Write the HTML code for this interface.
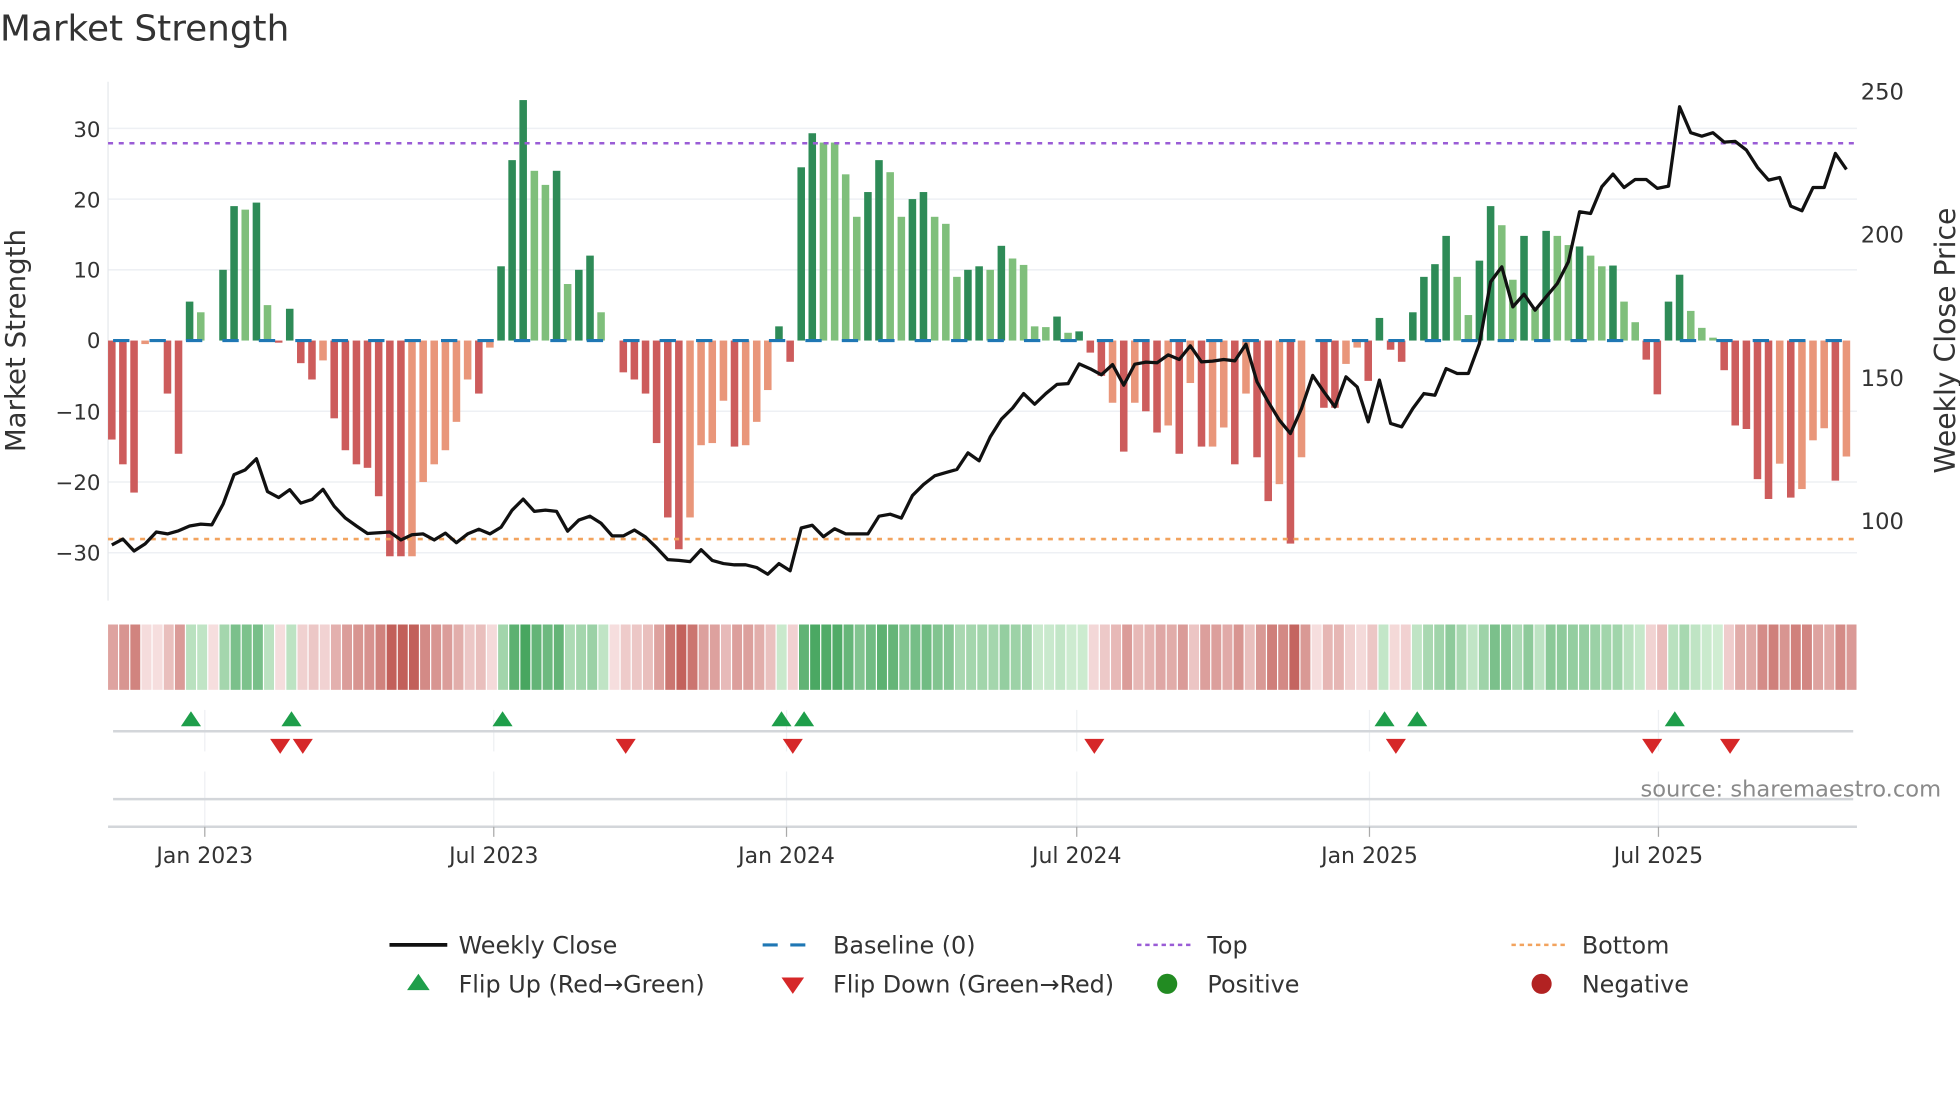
<!DOCTYPE html>
<html><head><meta charset="utf-8">
<style>
html,body{margin:0;padding:0;background:#fff;width:1960px;height:1102px;overflow:hidden}
svg{display:block}
text{font-family:"DejaVu Sans","Liberation Sans",sans-serif;fill:#333}
</style></head>
<body>
<svg id="s" width="1960" height="1102" viewBox="0 0 1560 877" xmlns="http://www.w3.org/2000/svg">
<rect width="1560" height="877" fill="#fff"/>
<text x="0" y="32" font-size="28.5">Market Strength</text>
<g id="grid"></g>
<line x1="86" y1="65" x2="86" y2="478" stroke="#e6e8ec" stroke-width="1"/>
<g id="bars"></g>
<line x1="90" y1="271" x2="1476" y2="271" stroke="#1f77b4" stroke-width="2.5" stroke-dasharray="13,16"/>
<line x1="86" y1="114" x2="1478" y2="114" stroke="#9a5cd6" stroke-width="2" stroke-dasharray="4,4.5"/>
<line x1="86" y1="429" x2="1478" y2="429" stroke="#f2a35e" stroke-width="2" stroke-dasharray="4,4.5"/>
<polyline id="price" fill="none" stroke="#111" stroke-width="2.6" stroke-linejoin="round"/>
<g font-size="17" text-anchor="end">
<text x="80" y="109">30</text><text x="80" y="165">20</text><text x="80" y="221">10</text><text x="80" y="277">0</text>
<text x="80" y="334">−10</text><text x="80" y="390">−20</text><text x="80" y="446">−30</text>
</g>
<g font-size="18">
<text x="1481" y="79">250</text><text x="1481" y="193">200</text><text x="1481" y="307">150</text><text x="1481" y="421">100</text>
</g>
<text transform="translate(20,271) rotate(-90)" font-size="22" text-anchor="middle">Market Strength</text>
<text transform="translate(1556,271) rotate(-90)" font-size="22.5" text-anchor="middle">Weekly Close Price</text>
<g id="heat"></g>
<g stroke="#eef0f3" stroke-width="1">
<line x1="163" y1="565" x2="163" y2="598"/><line x1="393" y1="565" x2="393" y2="598"/><line x1="626" y1="565" x2="626" y2="598"/>
<line x1="857" y1="565" x2="857" y2="598"/><line x1="1090" y1="565" x2="1090" y2="598"/><line x1="1320" y1="565" x2="1320" y2="598"/>
<line x1="163" y1="614" x2="163" y2="658"/><line x1="393" y1="614" x2="393" y2="658"/><line x1="626" y1="614" x2="626" y2="658"/>
<line x1="857" y1="614" x2="857" y2="658"/><line x1="1090" y1="614" x2="1090" y2="658"/><line x1="1320" y1="614" x2="1320" y2="658"/>
</g>
<line x1="90" y1="582" x2="1475" y2="582" stroke="#d3d6da" stroke-width="2"/>
<line x1="90" y1="636" x2="1475" y2="636" stroke="#d3d6da" stroke-width="2"/>
<line x1="86" y1="658" x2="1478" y2="658" stroke="#d3d6da" stroke-width="2"/>
<g id="marks"></g>
<g stroke="#aaa" stroke-width="1">
<line x1="163" y1="658" x2="163" y2="666"/><line x1="393" y1="658" x2="393" y2="666"/><line x1="626" y1="658" x2="626" y2="666"/>
<line x1="857" y1="658" x2="857" y2="666"/><line x1="1090" y1="658" x2="1090" y2="666"/><line x1="1320" y1="658" x2="1320" y2="666"/>
</g>
<g font-size="17.5" text-anchor="middle">
<text x="163" y="687">Jan 2023</text><text x="393" y="687">Jul 2023</text><text x="626" y="687">Jan 2024</text>
<text x="857" y="687">Jul 2024</text><text x="1090" y="687">Jan 2025</text><text x="1320" y="687">Jul 2025</text>
</g>
<text x="1545" y="634" font-size="18" text-anchor="end" style="fill:#8a8a8a">source: sharemaestro.com</text>
<g font-size="19">
<line x1="310" y1="752" x2="356" y2="752" stroke="#111" stroke-width="3"/>
<text x="365" y="759">Weekly Close</text>
<line x1="607" y1="752" x2="651" y2="752" stroke="#1f77b4" stroke-width="2.5" stroke-dasharray="12,10"/>
<text x="663" y="759">Baseline (0)</text>
<line x1="905" y1="752" x2="949" y2="752" stroke="#9a5cd6" stroke-width="2" stroke-dasharray="3.5,3"/>
<text x="961" y="759">Top</text>
<line x1="1203" y1="752" x2="1247" y2="752" stroke="#f2a35e" stroke-width="2" stroke-dasharray="3.5,3"/>
<text x="1259" y="759">Bottom</text>
<polygon points="333,775 342,788 324,788" fill="#1e9e4a"/>
<text x="365" y="790">Flip Up (Red→Green)</text>
<polygon points="622,778 640,778 631,791" fill="#d62728"/>
<text x="663" y="790">Flip Down (Green→Red)</text>
<circle cx="929" cy="783" r="8" fill="#228b22"/>
<text x="961" y="790">Positive</text>
<circle cx="1227" cy="783" r="8" fill="#b22222"/>
<text x="1259" y="790">Negative</text>
</g>
</svg>
<script>
var V=[-14,-17.5,-21.5,-0.5,0,-7.5,-16,5.5,4,0,
10,19,18.5,19.5,5,-0.3,4.5,-3.2,-5.5,-2.8,
-11,-15.5,-17.5,-18,-22,-30.5,-30.5,-30.5,-20,-17.5,
-15.5,-11.5,-5.5,-7.5,-1,10.5,25.5,34,24,22,
24,8,10,12,4,0,-4.5,-5.5,-7.5,-14.5,
-25,-29.5,-25,-14.8,-14.5,-8.5,-15,-14.8,-11.5,-7,
2,-3,24.5,29.3,28,28,23.5,17.5,21,25.5,
23.8,17.5,20,21,17.5,16.5,9,10,10.5,10,
13.4,11.6,10.7,2,1.9,3.4,1.1,1.3,-1.7,-5,
-8.8,-15.7,-8.8,-10,-13,-12,-16,-6,-15,-15,
-12.3,-17.5,-7.5,-16.5,-22.7,-20.3,-28.7,-16.5,0,-9.5,
-9.5,-3.3,-1,-5.7,3.2,-1.3,-3,4,9,10.8,
14.8,9,3.6,11.3,19,16.3,8.6,14.8,4.5,15.5,
14.8,13.5,13.3,12,10.5,10.6,5.5,2.6,-2.7,-7.6,
5.5,9.3,4.2,1.8,0.4,-4.2,-12,-12.5,-19.6,-22.4,
-17.4,-22.2,-21,-14.1,-12.4,-19.8,-16.4];
var T="DDDL.DDGg."+"GGgGgDGDDL"+"DDDDDDDLLL"+"LLLDLGGGgg"+"GgGGg.DDDD"+"DDLLLLDLLL"+"GDGGggggGG"+"ggGGgggGGg"+"GggggGgGDD"+"LDLDDLDLDL"+"LDLDDLDL.D"+"DLLDGDDGGG"+"GggGGggGgG"+"ggGggGggDD"+"GGgggDDDDD"+"LDLLLDL";
var COL={D:"#cd5c5c",L:"#e9967a",G:"#2e8b57",g:"#7fbf7b",".":"#fff"};
var h="";
[30,20,10,-10,-20,-30].forEach(function(v){var y=271-v*5.63;h+='<line x1="86" y1="'+y+'" x2="1478" y2="'+y+'" stroke="#eef0f4" stroke-width="1.2"/>';});
document.getElementById("grid").innerHTML=h;
h="";
for(var i=0;i<V.length;i++){var v=V[i];if(!v)continue;var x=89+8.85*i-3;var y1=271,y2=271-v*5.63;
h+='<rect x="'+x.toFixed(1)+'" y="'+Math.min(y1,y2).toFixed(1)+'" width="6" height="'+Math.abs(y2-y1).toFixed(1)+'" fill="'+(COL[T[i]]||"#cd5c5c")+'"/>';}
document.getElementById("bars").innerHTML=h;
h="";
function mix(a,b,t){return "rgb("+a.map(function(c,k){return Math.round(c+(b[k]-c)*t)}).join(",")+")";}
for(var i=0;i<V.length;i++){var v=V[i];var t=Math.min(1,Math.abs(v)/30);var c;
if(v>0)c=mix([210,238,212],[72,166,96],t);else c=mix([246,222,222],[194,96,90],t);
h+='<rect x="'+(86+8.87*i).toFixed(2)+'" y="497" width="7.9" height="52" fill="'+c+'"/>';}
document.getElementById("heat").innerHTML=h;
var A=[1378,1363,1393,1375,1345,1350,1342,1330,1325,1327,1275,1200,1188,1160,1243,1258,1238,1272,1263,1237,1280,1310,1330,1349,1347,1345,1365,1352,1350,1365,1348,1372,1350,1338,1350,1333,1290,1262,1293,1290,1293,1343,1315,1305,1323,1355,1355,1340,1358,1385,1415,1417,1420,1390,1417,1425,1428,1428,1435,1452,1425,1443,1335,1328,1357,1337,1350,1350,1350,1305,1300,1310,1253,1225,1203,1195,1187,1145,1165,
1105,1060,1032,995,1022,995,972,970,920];
var B=[866,884,853,915,852,846,848,824,838,797,845,843,838,842,792,905,965,1020,1060,985,886,935,980,890,920,1025,900,1030,1040,985,940,945,865,880,880,790,605,
560,680,642,690,650,610,545,395,400,320,282,322,298,298,325,318,80,158,168,158,186,184,210,262,300,292,378,392,322,322,220,268];
var P=[];A.forEach(function(d){P.push(d/3.177)});B.forEach(function(d){P.push((80+d/3)/1.256)});
document.getElementById("price").setAttribute("points",P.map(function(y,i){return (89+8.85*i).toFixed(1)+","+y.toFixed(1)}).join(" "));
h="";
[152,232,400,622,640,1102,1128,1333].forEach(function(x){h+='<polygon points="'+x+',566 '+(x+8)+',578 '+(x-8)+',578" fill="#1e9e4a"/>';});
[223,241,498,631,871,1111,1315,1377].forEach(function(x){h+='<polygon points="'+(x-8)+',588 '+(x+8)+',588 '+x+',600" fill="#d62728"/>';});
document.getElementById("marks").innerHTML=h;
</script>
</body></html>
